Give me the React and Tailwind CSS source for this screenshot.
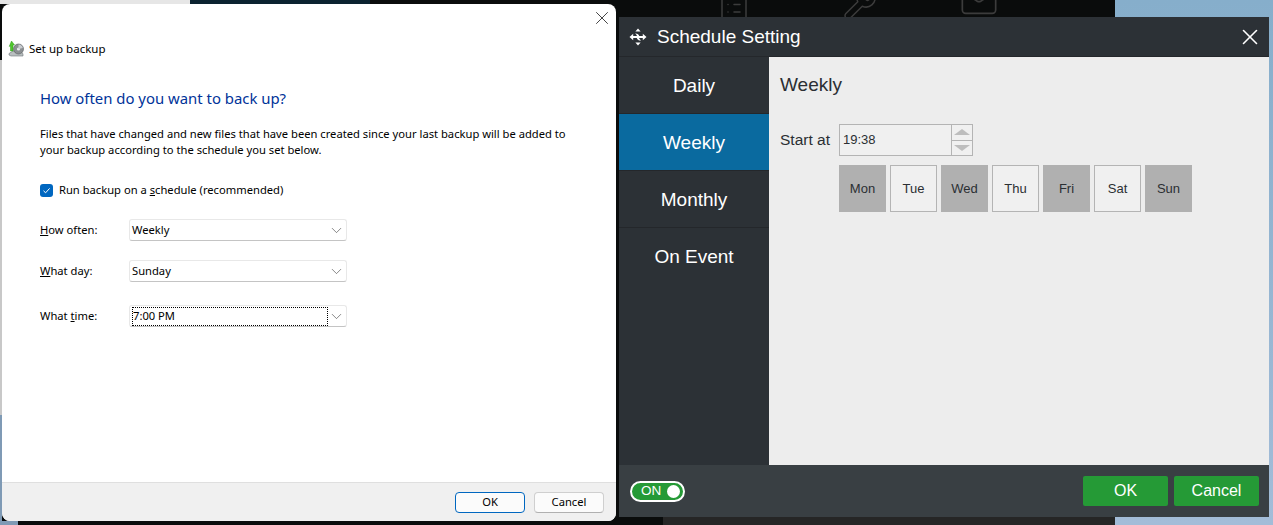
import { ChevronDown, ClipboardList, Mail, Wrench, X } from "lucide-react";

const days = [
  { name: "Mon", on: true },
  { name: "Tue", on: false },
  { name: "Wed", on: true },
  { name: "Thu", on: false },
  { name: "Fri", on: true },
  { name: "Sat", on: false },
  { name: "Sun", on: true },
];

const tabs = ["Daily", "Weekly", "Monthly", "On Event"];

const BackupIcon = () => (
  <svg width="17" height="17" viewBox="0 0 17 17" className="shrink-0">
    <path d="M1 13.5 L5 11 H13 L15 14 V16 H3 L1 15 Z" fill="#b9bfc0" stroke="#6f7678" strokeWidth="0.6" />
    <circle cx="10.5" cy="9" r="5" fill="#8b8f92" stroke="#55595c" strokeWidth="0.6" />
    <circle cx="10.5" cy="9" r="1.6" fill="#e9ecee" />
    <path d="M10.5 4.5 A4.5 4.5 0 0 1 14.8 8 L10.5 9 Z" fill="#c9ccd0" />
    <path d="M3.5 1 L6.5 5 H5 V11 H2.5 V6 L1.2 6.4 Z" fill="#4fc62c" stroke="#2f9a1c" strokeWidth="0.5" />
  </svg>
);

const MoveIcon = () => (
  <svg width="18" height="18" viewBox="0 0 18 18" fill="white" className="shrink-0">
    <path d="M9 0.5 L11.6 3.4 H6.4 Z" />
    <path d="M9 17.5 L6.4 14.6 H11.6 Z" />
    <path d="M0.5 9 L4.2 5.8 V7.9 H8 C7.4 6.6 6.6 5.9 5.8 5.5 C8.4 5.3 10 6.6 10.4 8.6 L10.4 10 H4.2 V12.2 Z" />
    <path d="M17.5 9 L13.8 12.2 V10.1 H10 C10.6 11.4 11.4 12.1 12.2 12.5 C9.6 12.7 8 11.4 7.6 9.4 L7.6 8 H13.8 V5.8 Z" />
  </svg>
);

const Combo = ({ value, focused }) => (
  <div className="flex h-[22px] w-[218px] items-center rounded-[3px] border border-[#e8e8e8] border-b-[#c4c4c4] bg-white pl-[2px]">
    {focused ? (
      <span className="flex h-[19px] w-[196px] items-center border border-dotted border-black leading-none">
        {value}
      </span>
    ) : (
      <span className="w-[196px]">{value}</span>
    )}
    <ChevronDown size={17} strokeWidth={0.9} className="text-[#444]" />
  </div>
);

const Row = ({ label, className, ...rest }) => (
  <div className={`flex items-center ${className}`}>
    <span className="w-[89px]">{label}</span>
    <Combo {...rest} />
  </div>
);

const BackupDialog = () => (
  <div className="absolute left-[2px] top-[4px] flex h-[517px] w-[614px] flex-col overflow-hidden rounded-[8px] bg-white font-['Noto_Sans',sans-serif] text-[11.2px] text-black">
    <div className="flex h-[24px] justify-end pr-[3px] pt-[3px]">
      <X size={22} strokeWidth={0.8} />
    </div>
    <div className="mt-[12px] flex items-center gap-[4px] pl-[6px]">
      <BackupIcon />
      <span className="text-[11.5px]">Set up backup</span>
    </div>
    <div className="flex-1 pl-[38px]">
      <h1 className="mt-[31px] text-[14.9px] leading-[20px] font-normal text-[#003399]">
        How often do you want to back up?
      </h1>
      <p className="mt-[18px] leading-[16px]">
        Files that have changed and new files that have been created since your last backup will be added to
        <br />
        your backup according to the schedule you set below.
      </p>
      <div className="mt-[24px] flex items-center gap-[6px]">
        <span className="flex h-[13px] w-[13px] items-center justify-center rounded-[3px] bg-[#0067c0]">
          <svg width="9" height="9" viewBox="0 0 9 9" fill="none" stroke="white" strokeWidth="1">
            <path d="M1.5 4.8 L3.6 6.8 L7.6 2.4" />
          </svg>
        </span>
        <span>
          Run backup on a <u>s</u>chedule (recommended)
        </span>
      </div>
      <div className="mt-[20px] flex flex-col">
        <Row label={<><u>H</u>ow often:</>} value="Weekly" />
        <Row label={<><u>W</u>hat day:</>} value="Sunday" className="mt-[19px]" />
        <Row label={<>What <u>t</u>ime:</>} value="7:00 PM" focused className="mt-[23px]" />
      </div>
    </div>
    <div className="flex h-[39px] items-center justify-end gap-[9px] border-t border-[#dfdfdf] bg-[#f0f0f0] pr-[12px]">
      <button className="h-[21px] w-[70px] rounded-[4px] border border-[#0067c0] bg-[#fbfbfb]">OK</button>
      <button className="h-[21px] w-[70px] rounded-[4px] border border-[#cfcfcf] border-b-[#b0b0b0] bg-[#fbfbfb]">
        Cancel
      </button>
    </div>
  </div>
);

const ScheduleDialog = () => (
  <div className="absolute left-[619px] top-[17px] flex h-[500px] w-[650px] flex-col bg-[#2c3136] font-['Liberation_Sans',sans-serif] text-white">
    <div className="flex h-[40px] items-center border-b border-[#24272b] pl-[10px] pr-[6px]">
      <MoveIcon />
      <span className="ml-[10px] pt-[2px] text-[19px]">Schedule Setting</span>
      <X size={26} strokeWidth={1.5} className="ml-auto mt-[1px]" />
    </div>
    <div className="flex flex-1">
      <div className="flex w-[150px] flex-col">
        {tabs.map((tab) => (
          <div
            key={tab}
            className={`flex h-[57px] items-center justify-center border-b border-[#24272b] pt-[2px] text-[19px] last:border-b-0 ${
              tab === "Weekly" ? "bg-[#0a6a9f]" : ""
            }`}
          >
            {tab}
          </div>
        ))}
      </div>
      <div className="flex-1 bg-[#ededed] pl-[11px] pr-[2px] text-[#2b2f33]">
        <div className="mt-[17px] text-[19px] leading-[21px]">Weekly</div>
        <div className="mt-[29px] flex items-center gap-[9px]">
          <span className="w-[50px] text-[15.5px] whitespace-nowrap">Start at</span>
          <div className="flex h-[32px] w-[134px] border border-[#b4b4b4] bg-[#f0f0f0]">
            <span className="flex flex-1 items-center pl-[3px] text-[13px]">19:38</span>
            <div className="flex w-[21px] flex-col border-l border-[#b4b4b4]">
              <div className="flex flex-1 items-center justify-center border-b border-[#b4b4b4]">
                <span className="h-0 w-0 border-x-[8px] border-b-[6px] border-x-transparent border-b-[#bdbdbd]" />
              </div>
              <div className="flex flex-1 items-center justify-center">
                <span className="h-0 w-0 border-x-[8px] border-t-[6px] border-x-transparent border-t-[#bdbdbd]" />
              </div>
            </div>
          </div>
        </div>
        <div className="ml-[59px] mt-[9px] flex gap-[4px]">
          {days.map((day) => (
            <div
              key={day.name}
              className={`flex h-[47px] w-[47px] items-center justify-center text-[13px] ${
                day.on ? "bg-[#b0b0b0]" : "border border-[#b4b4b4] bg-[#f0f0f0]"
              }`}
            >
              {day.name}
            </div>
          ))}
        </div>
      </div>
    </div>
    <div className="flex h-[52px] items-center bg-[#393f43] pl-[11px] pr-[10px]">
      <div className="flex h-[21px] w-[55px] items-center rounded-full border-2 border-white bg-[#259a36] pl-[9px] pr-[3px]">
        <span className="text-[13.5px] leading-none">ON</span>
        <span className="ml-auto h-[13px] w-[13px] rounded-full bg-white" />
      </div>
      <button className="ml-auto h-[30px] w-[85px] rounded-[2px] bg-[#259a36] text-[16px]">OK</button>
      <button className="ml-[6px] h-[30px] w-[85px] rounded-[2px] bg-[#259a36] text-[16px]">Cancel</button>
    </div>
  </div>
);

export default function App() {
  return (
    <div className="relative h-[525px] w-[1273px] overflow-hidden bg-[#0a0c0c]">
      {/* desktop behind the windows */}
      <div className="absolute left-0 top-0 h-[4px] w-[190px] bg-[#e6e6e6]" />
      <div className="absolute left-[190px] top-0 h-[4px] w-[180px] bg-[#0b2230]" />
      <div className="absolute left-0 top-[60px] h-[355px] w-[2px] bg-[#c8c8c8]" />
      <div className="absolute bottom-0 left-0 h-[110px] w-[2px] bg-[#7f9ab5]" />
      <div className="absolute bottom-0 left-0 h-[4px] w-[18px] bg-[#7f9ab5]" />
      <div className="absolute bottom-0 left-[663px] h-[8px] w-[452px] bg-[#262626]" />
      <div className="absolute right-0 top-0 h-full w-[158px] bg-gradient-to-b from-[#86aecb] to-[#a3bcd8]" />
      <ClipboardList size={36} strokeWidth={1} className="absolute left-[716px] top-[-12px] text-[#3c3c3c]" />
      <Wrench size={36} strokeWidth={1} className="absolute left-[842px] top-[-14px] text-[#3c3c3c]" />
      <Mail size={40} strokeWidth={1} className="absolute left-[959px] top-[-20px] text-[#3c3c3c]" />
      <BackupDialog />
      <ScheduleDialog />
    </div>
  );
}
